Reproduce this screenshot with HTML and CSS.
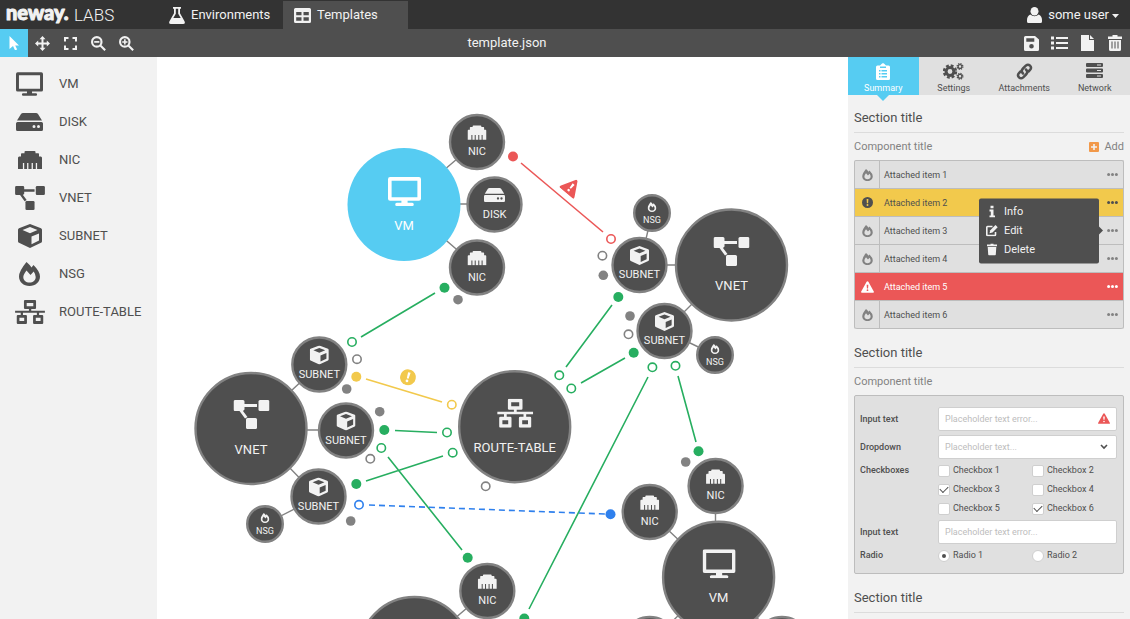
FILE: index.html
```html
<!DOCTYPE html>
<html lang="en">
<head>
<meta charset="utf-8">
<title>Neway Labs – Templates</title>
<link rel="stylesheet" href="styles.css">
</head>
<body>
<svg class="sprite" aria-hidden="true">
  <symbol id="vm" viewBox="0 0 32 28"><path fill-rule="evenodd" d="M2 0h28a2 2 0 0 1 2 2v19a2 2 0 0 1-2 2H19v2h4.500a1.300 1.300 0 0 1 0 3h-15a1.300 1.300 0 0 1 0-3H13v-2H2a2 2 0 0 1-2-2V2a2 2 0 0 1 2-2zM3.500 3.500v16h25v-16z"/></symbol>
  <symbol id="disk" viewBox="0 0 27 18"><path fill-rule="evenodd" d="M7 0h13q1.200 0 2 1l4 6.500H1L5 1q.8-1 2-1zM1.500 9h24A1.500 1.500 0 0 1 27 10.500v6a1.500 1.500 0 0 1-1.500 1.500h-24A1.500 1.500 0 0 1 0 16.500v-6A1.500 1.500 0 0 1 1.500 9zM18 12a1.500 1.500 0 1 0 0 3 1.500 1.500 0 0 0 0-3zM22.500 12a1.500 1.500 0 1 0 0 3 1.500 1.500 0 0 0 0-3z"/></symbol>
  <symbol id="nic" viewBox="0 0 24 18"><path d="M0 18V6.500L1 5.500h2V3q0-.8.800-.8H6.500V1q0-1 1-1h9q1 0 1 1v1.200h2.700q.8 0 .8.800v2.500h2l1 1V18h-4.900v-6h-1.300v6h-2.900v-6h-1.300v6h-3.200v-6h-1.300v6H6.200v-6H4.900v6z"/></symbol>
  <symbol id="vnet" viewBox="0 0 36 29"><path d="M1.500 0h8A1.500 1.500 0 0 1 11 1.500V4h12.500v3H11v2.500L9.500 11 14 17 11.500 18.500 6 11H1.500A1.500 1.500 0 0 1 0 9.500v-8A1.500 1.500 0 0 1 1.500 0z"/><rect x="25" width="11" height="11" rx="1.500"/><rect x="12.500" y="18" width="11" height="11" rx="1.500"/></symbol>
  <symbol id="subnet" viewBox="0 0 24 24"><path fill-rule="evenodd" d="M12 0l11 4.200q1 .5 1 1.500v11.600q0 1-1 1.500L12 24 1 18.800q-1-.5-1-1.500V5.700q0-1 1-1.500zM12 3L4.500 6 12 9.200 19.500 6zM13.500 12.500v7.800L21 16.600V9.500z"/></symbol>
  <symbol id="nsg" viewBox="0 0 21 24"><path fill-rule="evenodd" d="M7.500 0q3 2.500 5 5.500L14.500 3Q21 9.500 21 14.500C21 20 16.500 24 10.500 24S0 20 0 14.500Q0 9 7.500 0zM7.500 8.500Q4.300 12.500 4.300 15c0 3.500 2.700 5.500 6.200 5.500s6.200-2 6.200-5.500q0-2.500-2-5.500L11.500 13z"/></symbol>
  <symbol id="route" viewBox="0 0 36 29"><path fill-rule="evenodd" d="M12 0h12a1.300 1.300 0 0 1 1.300 1.300v8.400A1.300 1.300 0 0 1 24 11h-4.500v2H36v2.500h-7V18h3.700a1.300 1.300 0 0 1 1.300 1.300v8.400a1.300 1.300 0 0 1-1.300 1.300H23a1.300 1.300 0 0 1-1.300-1.300v-8.400A1.300 1.300 0 0 1 23 18h3.300v-2.500H9.500V18H13a1.300 1.300 0 0 1 1.300 1.300v8.400A1.300 1.300 0 0 1 13 29H3.300A1.300 1.300 0 0 1 2 27.700v-8.400A1.300 1.300 0 0 1 3.300 18h3.500v-2.500H0V13h16.700v-2H12a1.300 1.300 0 0 1-1.300-1.300V1.300A1.300 1.300 0 0 1 12 0zM14 3.500v4h8v-4zM5.200 21.500v4h5.800v-4zM25 21.500v4h5.800v-4z"/></symbol>
  <symbol id="alert" viewBox="0 0 18 16"><path fill-rule="evenodd" d="M9 0q.8 0 1.200.8l7.500 13.400q.8 1.600-1 1.800H1.300q-1.800-.2-1-1.800L7.800.8Q8.200 0 9 0zM7.800 5l.4 5h1.600l.4-5zM9 11.200a1.200 1.200 0 1 0 0 2.400 1.200 1.200 0 0 0 0-2.400z"/></symbol>
  <symbol id="notice" viewBox="0 0 16 16"><path fill-rule="evenodd" d="M8 0a8 8 0 1 0 0 16A8 8 0 0 0 8 0zM6.700 3h2.600l-.4 6.200H7.100zM8 10.300a1.400 1.400 0 1 1 0 2.800 1.400 1.400 0 0 1 0-2.800z"/></symbol>
  <symbol id="dots" viewBox="0 0 11 3"><circle cx="1.600" cy="1.500" r="1.500"/><circle cx="5.500" cy="1.500" r="1.500"/><circle cx="9.400" cy="1.500" r="1.500"/></symbol>
</svg>

<header class="header">
  <div class="brand">
    <svg class="logo" role="img" aria-label="neway"><text x="1" y="19">neway.</text></svg>
    <span>LABS</span>
  </div>
  <nav class="nav">
    <a class="nav-tab" href="#environments">
      <svg width="16" height="17" viewBox="0 0 16 17"><path fill-rule="evenodd" d="M4 0h8v1.800h-1v4.500l4.500 8q1.200 2.700-1.500 2.700H2q-2.700 0-1.500-2.700l4.500-8V1.800H4zM6.800 1.800v5L4.300 11h7.400L9.200 6.800v-5z"/></svg>
      Environments
    </a>
    <a class="nav-tab is-active" href="#templates">
      <svg width="17" height="15" viewBox="0 0 17 15"><path fill-rule="evenodd" d="M1.500 0h14A1.500 1.500 0 0 1 17 1.500v12a1.500 1.500 0 0 1-1.500 1.500h-14A1.500 1.500 0 0 1 0 13.500v-12A1.500 1.500 0 0 1 1.500 0zM2.200 4v3.200h5.300V4zM9.500 4v3.200h5.300V4zM2.200 9.300v3.500h5.300V9.300zM9.500 9.300v3.500h5.300V9.300z"/></svg>
      Templates
    </a>
  </nav>
  <button class="user" type="button">
    <svg width="15" height="16" viewBox="0 0 15 16"><ellipse cx="7.500" cy="4.300" rx="4" ry="4.300"/><path d="M3.200 7.500q4.300 3.500 8.600 0Q15 9 15 13v1.500q0 1.500-1.500 1.500h-12Q0 16 0 14.500V13q0-4 3.200-5.500z"/></svg>
    some user
    <svg class="caret" width="7" height="4" viewBox="0 0 7 4"><path d="M0 0h7L3.500 4z"/></svg>
  </button>
</header>

<div class="toolbar">
  <div class="tools">
    <button class="tool is-active" type="button" aria-label="Select"><svg width="10" height="14" viewBox="0 0 10 14"><path d="M.5 0L10 9.500H6.200l2 4L6 14.200l-2-4.200L.5 13z"/></svg></button>
    <button class="tool" type="button" aria-label="Move"><svg width="15" height="15" viewBox="0 0 15 15"><path d="M7.500 0l3 3.200H8.500v3.300h3.300v-2L15 7.500l-3.200 3v-2H8.500v3.300h2l-3 3.200-3-3.200h2V8.500H3.200v2L0 7.500l3.200-3v2h3.300V3.200h-2z"/></svg></button>
    <button class="tool" type="button" aria-label="Fit to screen"><svg width="13" height="13" viewBox="0 0 13 13"><path class="line" d="M1 4.500V1h3.500M8.500 1H12v3.500M12 8.500V12H8.500M4.500 12H1V8.500"/></svg></button>
    <button class="tool" type="button" aria-label="Zoom out"><svg width="15" height="15" viewBox="0 0 14 14"><path class="line" d="M9.800 5.500a4.400 4.400 0 1 1-8.800 0 4.400 4.400 0 0 1 8.800 0zM9 9l4.200 4.200"/><path d="M3 4.700h4.800v1.600H3z"/></svg></button>
    <button class="tool" type="button" aria-label="Zoom in"><svg width="15" height="15" viewBox="0 0 14 14"><path class="line" d="M9.800 5.500a4.400 4.400 0 1 1-8.800 0 4.400 4.400 0 0 1 8.800 0zM9 9l4.200 4.200"/><path d="M3 4.800h1.700V3h1.500v1.800h1.700v1.400H6.200V8H4.700V6.200H3z"/></svg></button>
  </div>
  <h1 class="filename">template.json</h1>
  <div class="tools tools-end">
    <button class="tool" type="button" aria-label="Save"><svg width="15" height="15" viewBox="0 0 15 15"><path fill-rule="evenodd" d="M1.500 0H11l4 3.500v10a1.500 1.500 0 0 1-1.500 1.500h-12A1.500 1.500 0 0 1 0 13.500v-12A1.500 1.500 0 0 1 1.500 0zM2.300 2.300v3.400h8V2.300zM7.500 8a2.300 2.300 0 1 0 0 4.600 2.300 2.300 0 0 0 0-4.600z"/></svg></button>
    <button class="tool" type="button" aria-label="List"><svg width="17" height="14" viewBox="0 0 17 14"><path d="M0 .5h3v3H0zM5 1h12v2H5zM0 5.500h3v3H0zM5 6h12v2H5zM0 10.500h3v3H0zM5 11h12v2H5z"/></svg></button>
    <button class="tool" type="button" aria-label="New file"><svg width="13" height="16" viewBox="0 0 13 16"><path d="M0 0h8v5h5v11H0zM9 0l4 4H9z"/></svg></button>
    <button class="tool" type="button" aria-label="Delete"><svg width="14" height="16" viewBox="0 0 14 16"><path fill-rule="evenodd" d="M4.500 0h5v1.500H14V4H0V1.500h4.500zM1 5h12v9.500q0 1.500-1.500 1.500h-9Q1 16 1 14.500zM3.500 6.500v7h1v-7zM6.500 6.500v7h1v-7zM9.500 6.500v7h1v-7z"/></svg></button>
  </div>
</div>

<div class="workspace">
  <aside class="palette">
    <ul>
      <li><svg width="27" height="24"><use href="#vm"/></svg>VM</li>
      <li><svg width="27" height="18"><use href="#disk"/></svg>DISK</li>
      <li><svg width="24" height="18"><use href="#nic"/></svg>NIC</li>
      <li><svg width="30" height="24"><use href="#vnet"/></svg>VNET</li>
      <li><svg width="24" height="24"><use href="#subnet"/></svg>SUBNET</li>
      <li><svg width="21" height="24"><use href="#nsg"/></svg>NSG</li>
      <li><svg width="30" height="24"><use href="#route"/></svg>ROUTE-TABLE</li>
    </ul>
  </aside>

  <main class="canvas">
    <svg class="diagram">
      <g transform="translate(-157 -57)">
        <path class="join" d="M404 204L477 142M404 204h90M404 204l73 63M652 213l-12 52h91M731 265l-66 66 50 24M251 428l68-63M251 430h95M251 428l67 69-53 27M718 577l-69-65M715.500 577v-91M718 577l-69 67M718 577l64 67M414 653l73-62"/>

        <g class="link red"><path d="M521 163l82 69"/></g>
        <g class="link green"><path d="M435 293l-74 44M612 305l-46 62M581 383l44-25M648 377L529 609M678 376l18 66M395 430.500l42 2M388 457l74 93M366 481l77-25"/></g>
        <g class="link yellow"><path d="M366 379l76 23"/></g>
        <g class="link blue"><path stroke-dasharray="6 4" d="M369 505l236 9"/></g>

        <g class="ports red"><circle class="on" cx="513" cy="156.500" r="5"/><circle cx="611" cy="239" r="4.200"/></g>
        <g class="ports green">
          <circle class="on" cx="444.500" cy="287.700" r="5"/><circle cx="352" cy="342" r="4.200"/>
          <circle class="on" cx="618.300" cy="297" r="5"/><circle cx="559.300" cy="375.300" r="4.200"/>
          <circle class="on" cx="633.700" cy="352.700" r="5"/><circle cx="571.300" cy="388.500" r="4.200"/>
          <circle cx="652.400" cy="367.300" r="4.200"/><circle class="on" cx="524.300" cy="618.500" r="5"/>
          <circle cx="675.500" cy="365.800" r="4.200"/><circle class="on" cx="698.500" cy="451.300" r="5"/>
          <circle class="on" cx="384.300" cy="430" r="5"/><circle cx="447" cy="432.500" r="4.200"/>
          <circle cx="381.300" cy="448" r="4.200"/><circle class="on" cx="467.700" cy="557.800" r="5"/>
          <circle class="on" cx="356.300" cy="484" r="5"/><circle cx="452.700" cy="452.700" r="4.200"/>
        </g>
        <g class="ports yellow"><circle class="on" cx="356.300" cy="376.800" r="5"/><circle cx="451.800" cy="404.700" r="4.200"/></g>
        <g class="ports blue"><circle cx="359" cy="504.800" r="4.200"/><circle class="on" cx="610.500" cy="514.300" r="5"/></g>
        <g class="ports gray">
          <circle class="on" cx="458" cy="299.700" r="4.800"/><circle cx="602.400" cy="255.700" r="4.200"/><circle class="on" cx="603.300" cy="275.300" r="4.800"/>
          <circle class="on" cx="630" cy="316" r="4.800"/><circle cx="628.500" cy="334.300" r="4.200"/>
          <circle cx="357" cy="359.200" r="4.200"/><circle class="on" cx="346.700" cy="389" r="4.800"/>
          <circle class="on" cx="379.700" cy="411.700" r="4.800"/><circle cx="370.300" cy="458.800" r="4.200"/>
          <circle class="on" cx="350.700" cy="521" r="4.800"/><circle cx="485.700" cy="486.300" r="4.200"/>
          <circle class="on" cx="685.700" cy="462" r="4.800"/>
        </g>

        <g class="red" transform="translate(570 188.500) rotate(40)"><use href="#alert" x="-9.500" y="-11" width="19" height="17"/></g>
        <g class="yellow" transform="translate(408 377.300) rotate(16)"><use href="#notice" x="-8" y="-8" width="16" height="16"/></g>

        <g class="node big is-selected" transform="translate(404 204.500)"><circle r="56.500"/><use href="#vm" x="-16" y="-27.500" width="33" height="29"/><text y="25">VM</text></g>
        <g class="node" transform="translate(477 142)"><circle r="27"/><use href="#nic" x="-9.500" y="-17" width="19" height="15"/><text y="13">NIC</text></g>
        <g class="node" transform="translate(494.500 204.500)"><circle r="27"/><use href="#disk" x="-10.500" y="-16.500" width="21" height="14"/><text y="13">DISK</text></g>
        <g class="node" transform="translate(477 267.500)"><circle r="27"/><use href="#nic" x="-9.500" y="-17" width="19" height="15"/><text y="13">NIC</text></g>

        <g class="node big" transform="translate(731.500 265)"><circle r="55.500"/><use href="#vnet" x="-18" y="-28" width="36" height="29"/><text y="25">VNET</text></g>
        <g class="node" transform="translate(639.500 265)"><circle r="27"/><use href="#subnet" x="-9.500" y="-19" width="19" height="19"/><text y="13">SUBNET</text></g>
        <g class="node" transform="translate(664.500 331)"><circle r="27"/><use href="#subnet" x="-9.500" y="-19" width="19" height="19"/><text y="13">SUBNET</text></g>
        <g class="node small" transform="translate(652 213)"><circle r="17.800"/><use href="#nsg" x="-4.500" y="-11" width="9" height="10"/><text y="10">NSG</text></g>
        <g class="node small" transform="translate(715 355)"><circle r="17.800"/><use href="#nsg" x="-4.500" y="-11" width="9" height="10"/><text y="10">NSG</text></g>

        <g class="node big" transform="translate(251 428.500)"><circle r="55.500"/><use href="#vnet" x="-17.500" y="-28.500" width="36" height="29"/><text y="25">VNET</text></g>
        <g class="node" transform="translate(319.300 364.500)"><circle r="27"/><use href="#subnet" x="-9.500" y="-19" width="19" height="19"/><text y="13">SUBNET</text></g>
        <g class="node" transform="translate(346 430.500)"><circle r="27"/><use href="#subnet" x="-9.500" y="-19" width="19" height="19"/><text y="13">SUBNET</text></g>
        <g class="node" transform="translate(318.500 496.500)"><circle r="27"/><use href="#subnet" x="-9.500" y="-19" width="19" height="19"/><text y="13">SUBNET</text></g>
        <g class="node small" transform="translate(265 524)"><circle r="17.800"/><use href="#nsg" x="-4.500" y="-11" width="9" height="10"/><text y="10">NSG</text></g>

        <g class="node big" transform="translate(514.700 426.700)"><circle r="55.500"/><use href="#route" x="-17.500" y="-28" width="36" height="29"/><text y="25">ROUTE-TABLE</text></g>

        <g class="node" transform="translate(649.700 512)"><circle r="27"/><use href="#nic" x="-9.500" y="-17" width="19" height="15"/><text y="13">NIC</text></g>
        <g class="node" transform="translate(715.600 486)"><circle r="27"/><use href="#nic" x="-9.500" y="-17" width="19" height="15"/><text y="13">NIC</text></g>
        <g class="node big" transform="translate(718.600 577.300)"><circle r="55.500"/><use href="#vm" x="-16" y="-28" width="33" height="29"/><text y="25">VM</text></g>
        <g class="node" transform="translate(649.700 644)"><circle r="27"/></g>
        <g class="node" transform="translate(782 644)"><circle r="27"/></g>
        <g class="node" transform="translate(487.300 591)"><circle r="27"/><use href="#nic" x="-9.500" y="-17" width="19" height="15"/><text y="13">NIC</text></g>
        <g class="node big" transform="translate(414.500 652.500)"><circle r="55.500"/></g>
      </g>
    </svg>
  </main>

  <aside class="panel">
    <nav class="tabs">
      <a class="tab is-active" href="#summary"><svg width="14" height="17" viewBox="0 0 14 17"><path fill-rule="evenodd" d="M1.500 2.500H4L5.500 1 7 0l1.500 1L10 2.500h2.500Q14 2.500 14 4v11.500q0 1.500-1.500 1.500h-11Q0 17 0 15.500V4q0-1.500 1.500-1.500zM4 3.500V5h6V3.500zM3 7v1.500h1.500V7zM5.500 7v1.500H11V7zM3 10v1.500h1.500V10zM5.500 10v1.500H11V10zM3 13v1.500h1.500V13zM5.500 13v1.500H11V13z"/></svg>Summary</a>
      <a class="tab" href="#settings"><svg width="21" height="17" viewBox="0 0 21 17"><g fill="none" stroke="currentColor"><circle cx="7" cy="8.500" r="3.900" stroke-width="3"/><circle cx="7" cy="8.500" r="6" stroke-width="2.400" stroke-dasharray="2.800 1.912"/><circle cx="17" cy="3.500" r="1.900" stroke-width="1.300"/><circle cx="17" cy="3.500" r="2.900" stroke-width="1.200" stroke-dasharray="1.300 .977"/><circle cx="17" cy="13.300" r="1.900" stroke-width="1.300"/><circle cx="17" cy="13.300" r="2.900" stroke-width="1.200" stroke-dasharray="1.300 .977"/></g></svg>Settings</a>
      <a class="tab" href="#attachments"><svg width="17" height="17" viewBox="0 0 17 17"><g fill="none" stroke="currentColor" stroke-width="2.500" stroke-linecap="round"><path d="M7 10.500Q4.500 8 7 5.500l2.800-2.800q2.200-2 4.200 0t0 4.300L12.500 8.500"/><path d="M10 6.500q2.500 2.500 0 5l-2.800 2.800q-2.200 2-4.200 0t0-4.300L4.500 8.500"/></g></svg>Attachments</a>
      <a class="tab" href="#network"><svg width="17" height="15" viewBox="0 0 17 15"><path fill-rule="evenodd" d="M1 0h15q1 0 1 1v2q0 1-1 1H1Q0 4 0 3V1q0-1 1-1zM11 1.500v1h4v-1zM1 5.500h15q1 0 1 1v2q0 1-1 1H1q-1 0-1-1v-2q0-1 1-1zM11 7v1h4V7zM1 11h15q1 0 1 1v2q0 1-1 1H1q-1 0-1-1v-2q0-1 1-1zM11 12.500v1h4v-1z"/></svg>Network</a>
    </nav>

    <section class="section">
      <h2>Section title</h2>
      <div class="component-head">
        <h3>Component title</h3>
        <button class="add" type="button"><svg width="10" height="10" viewBox="0 0 10 10"><path fill-rule="evenodd" d="M1 0h8q1 0 1 1v8q0 1-1 1H1Q0 10 0 9V1q0-1 1-1zM4.200 2v2.200H2v1.600h2.200V8h1.600V5.800H8V4.200H5.800V2z"/></svg>Add</button>
      </div>
      <ul class="items">
        <li class="item"><span class="item-icon"><svg width="11" height="12"><use href="#nsg"/></svg></span><span class="item-name">Attached item 1</span><button class="more" type="button" aria-label="More"><svg width="11" height="3"><use href="#dots"/></svg></button></li>
        <li class="item is-warning"><span class="item-icon"><svg width="11" height="11"><use href="#notice"/></svg></span><span class="item-name">Attached item 2</span><button class="more" type="button" aria-label="More"><svg width="11" height="3"><use href="#dots"/></svg></button></li>
        <li class="item"><span class="item-icon"><svg width="11" height="12"><use href="#nsg"/></svg></span><span class="item-name">Attached item 3</span><button class="more" type="button" aria-label="More"><svg width="11" height="3"><use href="#dots"/></svg></button>
          <div class="menu">
            <button type="button"><svg width="12" height="12" viewBox="0 0 12 12"><path d="M4.500 0h3v2.800h-3zM3.500 4h4v6H9v2H3.500v-2h1.300V6H3.500z"/></svg>Info</button>
            <button type="button"><svg width="12" height="12" viewBox="0 0 12 12"><path class="line" d="M6.500 2H1.500Q.8 2 .8 2.700v7.600q0 .7.7.7h7.300q.7 0 .7-.7V7.500"/><path d="M9.500.5l2.200 2.200-5.200 5.200-3 .8.800-3z"/></svg>Edit</button>
            <button type="button"><svg width="12" height="12" viewBox="0 0 12 12"><path d="M4.500 0h3v1H11v1.700H1V1h3.500zM1.700 3.500h8.600l-.5 7.500q-.1 1-1 1H3.200q-.9 0-1-1z"/></svg>Delete</button>
          </div>
        </li>
        <li class="item"><span class="item-icon"><svg width="11" height="12"><use href="#nsg"/></svg></span><span class="item-name">Attached item 4</span><button class="more" type="button" aria-label="More"><svg width="11" height="3"><use href="#dots"/></svg></button></li>
        <li class="item is-error"><span class="item-icon"><svg width="13" height="12"><use href="#alert"/></svg></span><span class="item-name">Attached item 5</span><button class="more" type="button" aria-label="More"><svg width="11" height="3"><use href="#dots"/></svg></button></li>
        <li class="item"><span class="item-icon"><svg width="11" height="12"><use href="#nsg"/></svg></span><span class="item-name">Attached item 6</span><button class="more" type="button" aria-label="More"><svg width="11" height="3"><use href="#dots"/></svg></button></li>
      </ul>
    </section>

    <section class="section">
      <h2>Section title</h2>
      <div class="component-head"><h3>Component title</h3></div>
      <form class="form">
        <label class="field-label" for="text-1">Input text</label>
        <div class="control"><input id="text-1" type="text" placeholder="Placeholder text error..."><svg class="control-icon red" width="12" height="11"><use href="#alert"/></svg></div>

        <label class="field-label" for="drop">Dropdown</label>
        <div class="control"><select id="drop"><option>Placeholder text...</option></select><svg class="control-icon" width="12" height="11" viewBox="0 0 12 11"><path class="line" d="M3 4l3 3 3-3"/></svg></div>

        <span class="field-label" id="checks">Checkboxes</span>
        <div class="choices" role="group" aria-labelledby="checks">
          <label><input type="checkbox">Checkbox 1</label>
          <label><input type="checkbox">Checkbox 2</label>
          <label><input type="checkbox" checked>Checkbox 3</label>
          <label><input type="checkbox">Checkbox 4</label>
          <label><input type="checkbox">Checkbox 5</label>
          <label><input type="checkbox" checked>Checkbox 6</label>
        </div>

        <label class="field-label" for="text-2">Input text</label>
        <div class="control"><input id="text-2" type="text" placeholder="Placeholder text error..."></div>

        <span class="field-label" id="radios">Radio</span>
        <div class="choices" role="radiogroup" aria-labelledby="radios">
          <label><input type="radio" name="radio" checked>Radio 1</label>
          <label><input type="radio" name="radio">Radio 2</label>
        </div>
      </form>
    </section>

    <section class="section">
      <h2>Section title</h2>
    </section>
  </aside>
</div>
</body>
</html>
```
FILE: styles.css
```css
:root {
  --ink: #4f4f4f;
  --black: #333333;
  --gray: #828282;
  --edge: #bdbdbd;
  --fill: #e0e0e0;
  --light: #f2f2f2;
  --sky: #56ccf2;
  --red: #eb5757;
  --yellow: #f2c94c;
  --green: #27ae60;
  --blue: #2f80ed;
  --orange: #f2994a;
}

* { box-sizing: border-box; }

body {
  margin: 0;
  height: 100vh;
  display: flex;
  flex-direction: column;
  overflow: hidden;
  background: #fff;
  color: var(--ink);
  font: 13px/16px Roboto, "Liberation Sans", sans-serif;
}

h1, h2, h3, ul { margin: 0; padding: 0; font-size: 13px; font-weight: 400; list-style: none; }
a { color: inherit; text-decoration: none; }
button { margin: 0; padding: 0; border: 0; background: none; color: inherit; font: inherit; }
svg { flex: none; fill: currentColor; }

.sprite { position: absolute; width: 0; height: 0; }
.line { fill: none; stroke: currentColor; stroke-width: 2; }
.red { color: var(--red); }
.green { color: var(--green); }
.yellow { color: var(--yellow); }
.blue { color: var(--blue); }
.gray { color: var(--gray); }

/* Header */
.header { display: flex; height: 29px; background: var(--black); color: var(--light); }
.brand { display: flex; align-items: center; gap: 2px; width: 158px; padding-left: 5px; font-size: 17px; font-weight: 300; }
.logo { width: 67px; height: 28px; overflow: visible; }
.logo text { font: 900 20px/20px Lato, sans-serif; stroke: currentColor; stroke-width: 1; stroke-linejoin: round; }
.nav { display: flex; padding-top: 1px; }
.nav-tab { display: flex; align-items: center; gap: 6px; width: 125px; padding-left: 11px; }
.nav-tab.is-active { background: var(--ink); }
.user { display: flex; align-items: center; gap: 6px; margin-left: auto; padding-right: 11px; }
.caret { margin: 3px 0 0 -3px; }

/* Toolbar */
.toolbar { display: grid; grid-template-columns: 157px 1fr 282px; height: 28px; background: var(--ink); color: var(--light); }
.tools { display: flex; }
.tools-end { justify-content: flex-end; padding-right: 1px; }
.tool { display: flex; align-items: center; justify-content: center; width: 28px; height: 28px; }
.tool.is-active { background: var(--sky); color: #fff; }
.filename { padding-left: 9px; line-height: 28px; text-align: center; }

/* Workspace */
.workspace { flex: 1; min-height: 0; display: grid; grid-template-columns: 157px 1fr 282px; }
.palette { background: var(--light); padding-top: 8px; }
.palette li { display: grid; grid-template-columns: 59px 1fr; align-items: center; height: 38px; }
.palette svg { justify-self: center; }
.canvas { min-width: 0; overflow: hidden; }
.diagram { display: block; width: 100%; height: 100%; }

.join { fill: none; stroke: var(--gray); stroke-width: 1.4; }
.link { fill: none; stroke: currentColor; stroke-width: 1.6; }
.ports circle { fill: #fff; stroke: currentColor; stroke-width: 1.6; }
.ports .on { fill: currentColor; stroke: none; }
.node { color: var(--light); font-size: 11px; }
.node circle { fill: var(--ink); stroke: var(--gray); stroke-width: 2.4; }
.node use, .node text { fill: currentColor; }
.node text { text-anchor: middle; }
.node.big { font-size: 13px; }
.node.small { font-size: 9px; }
.node.is-selected { color: #fff; }
.node.is-selected circle { fill: var(--sky); stroke: none; }

/* Side panel */
.panel { background: var(--light); overflow: hidden; }
.tabs { display: grid; grid-template-columns: repeat(4, 1fr); height: 38px; margin-bottom: 15px; background: var(--fill); font-size: 9px; line-height: 12px; }
.tab { position: relative; display: flex; flex-direction: column; align-items: center; justify-content: space-between; padding: 6px 0 1px; }
.tab.is-active { background: var(--sky); color: #fff; }
.tab.is-active::after { content: ""; position: absolute; top: 100%; left: 50%; margin-left: -6px; border: 6px solid transparent; border-top-color: var(--sky); border-bottom: 0; }

.section { padding: 0 6px; margin-bottom: 16px; }
.section h2 { padding-bottom: 6px; border-bottom: 1px solid #dcdcdc; color: var(--ink); }
.component-head { display: flex; justify-content: space-between; margin: 6px 0 5px; color: var(--gray); }
.component-head h3, .add { font-size: 11px; }
.add { display: flex; align-items: center; gap: 5px; }
.add svg { color: var(--orange); }

.items { border: 1px solid var(--edge); border-bottom: 0; border-radius: 2px; background: var(--fill); font-size: 9px; }
.item { position: relative; display: flex; align-items: center; height: 28px; border-bottom: 1px solid var(--edge); }
.item:last-child { border-radius: 0 0 2px 2px; }
.item-icon { display: flex; align-items: center; justify-content: center; align-self: stretch; width: 25px; border-right: 1px solid var(--edge); color: var(--gray); }
.item-name { flex: 1; padding-left: 4px; }
.more { display: flex; padding: 8px 5px; color: var(--gray); }
.is-warning { background: var(--yellow); }
.is-warning .item-icon, .is-warning .more { color: var(--ink); border-color: transparent; }
.is-error { background: var(--red); color: #fff; }
.is-error .item-icon, .is-error .more { color: #fff; border-color: transparent; }

.menu { position: absolute; z-index: 1; top: 50%; right: 24px; width: 120px; padding: 4px 7px; border-radius: 2px; background: var(--ink); color: var(--light); font-size: 11px; transform: translateY(-50%); }
.menu::after { content: ""; position: absolute; top: 50%; left: 100%; margin-top: -4px; border: 4px solid transparent; border-left-color: var(--ink); border-right: 0; }
.menu button { display: flex; align-items: center; gap: 6px; width: 100%; height: 19px; }
.menu .line { stroke-width: 1.6; }

.form { display: grid; grid-template-columns: 74px 1fr; gap: 4px; padding: 11px 6px 10px 5px; border: 1px solid var(--edge); border-radius: 2px; background: var(--fill); font-size: 9px; line-height: 15px; }
.field-label { font-weight: 500; }
.field-label:not(span) { align-self: center; }
.control { position: relative; }
.control input, .control select { appearance: none; display: block; width: 100%; height: 24px; margin: 0; padding: 0 24px 0 6px; border: 1px solid #cfcfcf; border-radius: 2px; background: #fff; color: var(--edge); font: inherit; }
.control input::placeholder { color: var(--edge); }
.control-icon { position: absolute; top: 6px; right: 7px; pointer-events: none; }
.control-icon .line { stroke-width: 1.6; }
.choices { display: grid; grid-template-columns: 1fr 1fr; gap: 4px 9px; }
.choices label { display: flex; align-items: center; gap: 3px; height: 15px; }
.choices input { appearance: none; display: grid; place-items: center; flex: none; width: 12px; height: 12px; margin: 0; border: 1px solid #cfcfcf; border-radius: 2px; background: #fff; }
.choices input[type="radio"] { border-radius: 50%; }
.choices input[type="checkbox"]:checked::before { content: ""; width: 7px; height: 4px; margin-bottom: 2px; border: solid var(--ink); border-width: 0 0 1px 1px; transform: rotate(-45deg); }
.choices input[type="radio"]:checked::before { content: ""; width: 4px; height: 4px; border-radius: 50%; background: var(--ink); }
```
